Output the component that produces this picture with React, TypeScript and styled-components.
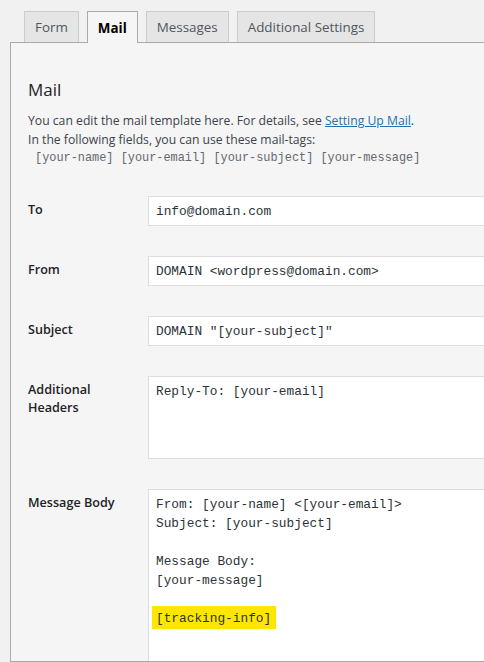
import React from "react";
import styled, { createGlobalStyle } from "styled-components";

const GlobalStyle = createGlobalStyle`
  html, body {
    margin: 0;
    padding: 0;
    background: #f1f1f1;
    overflow: hidden;
  }
  body {
    font-family: "Open Sans", "Noto Sans", sans-serif;
    color: #1d2327;
  }
`;

const Page = styled.div`
  padding: 11px 0 0 10px;
  height: 662px;
  box-sizing: border-box;
  display: flex;
  flex-direction: column;
`;

const TabBar = styled.nav`
  display: flex;
  align-items: flex-start;
  gap: 8px;
  padding-left: 14px;
  margin-bottom: -1px;
  position: relative;
  z-index: 1;
`;

const Tab = styled.div<{ $active?: boolean }>`
  height: ${(p) => (p.$active ? 32 : 31)}px;
  box-sizing: border-box;
  padding: 0 10px;
  display: flex;
  align-items: center;
  font-size: 13.4px;
  font-weight: ${(p) => (p.$active ? 700 : 400)};
  color: ${(p) => (p.$active ? "#000" : "#50575e")};
  background: ${(p) => (p.$active ? "#f5f5f5" : "#e5e5e5")};
  border: 1px solid ${(p) => (p.$active ? "#aaa" : "#ccc")};
  border-bottom: none;
`;

const Panel = styled.section`
  flex: 1;
  background: #f5f5f5;
  border: 1px solid #aaa;
  border-right: none;
  padding: 36px 0 0 17px;
  overflow: hidden;
`;

const Heading = styled.h2`
  margin: 0 0 10px;
  font-size: 17px;
  font-weight: 400;
  line-height: 22px;
  color: #1d2327;
`;

const Intro = styled.p`
  margin: 0;
  font-size: 12.2px;
  line-height: 19px;
  color: #3c434a;

  a {
    color: #2271b1;
    text-decoration: underline;
  }
`;

const TagList = styled.div`
  padding-left: 7px;
  font-family: "Liberation Mono", monospace;
  font-size: 11.9px;
  line-height: 19px;
  color: #646970;
  white-space: pre;
`;

const FieldTable = styled.div`
  margin-top: 13px;
  display: flex;
  flex-direction: column;
`;

const Row = styled.div`
  display: grid;
  grid-template-columns: 120px 1fr;
  padding: 15px 0;
`;

const Label = styled.label`
  padding-top: 5px;
  font-size: 12.6px;
  font-weight: 600;
  line-height: 18px;
  color: #1d2327;
`;

const Field = styled.div<{ $height: number; $multi?: boolean }>`
  height: ${(p) => p.$height}px;
  box-sizing: border-box;
  background: #fff;
  border: 1px solid #ddd;
  border-right: none;
  padding: ${(p) => (p.$multi ? "5px 7px" : "0 7px")};
  display: ${(p) => (p.$multi ? "block" : "flex")};
  align-items: center;
  font-family: "Liberation Mono", monospace;
  font-size: 12.8px;
  line-height: 19px;
  color: #2c3338;
  white-space: pre;
`;

const Marker = styled.span`
  background: #ffe600;
  margin-left: -4px;
  padding: 5px 5px 3px 4px;
`;

const App = (): JSX.Element => {
  return (
    <Page>
      <GlobalStyle />
      <TabBar>
        <Tab>Form</Tab>
        <Tab $active>Mail</Tab>
        <Tab>Messages</Tab>
        <Tab>Additional Settings</Tab>
      </TabBar>
      <Panel>
        <Heading>Mail</Heading>
        <Intro>
          You can edit the mail template here. For details, see{" "}
          <a href="#">Setting Up Mail</a>.
          <br />
          In the following fields, you can use these mail-tags:
        </Intro>
        <TagList>[your-name] [your-email] [your-subject] [your-message]</TagList>
        <FieldTable>
          <Row>
            <Label>To</Label>
            <Field $height={30}>info@domain.com</Field>
          </Row>
          <Row>
            <Label>From</Label>
            <Field $height={30}>{"DOMAIN <wordpress@domain.com>"}</Field>
          </Row>
          <Row>
            <Label>Subject</Label>
            <Field $height={30}>DOMAIN "[your-subject]"</Field>
          </Row>
          <Row>
            <Label>
              Additional
              <br />
              Headers
            </Label>
            <Field $height={83} $multi>
              Reply-To: [your-email]
            </Field>
          </Row>
          <Row>
            <Label>Message Body</Label>
            <Field $height={260} $multi>
              {"From: [your-name] <[your-email]>\nSubject: [your-subject]\n\nMessage Body:\n[your-message]\n\n"}
              <Marker>[tracking-info]</Marker>
            </Field>
          </Row>
        </FieldTable>
      </Panel>
    </Page>
  );
};

export default App;
